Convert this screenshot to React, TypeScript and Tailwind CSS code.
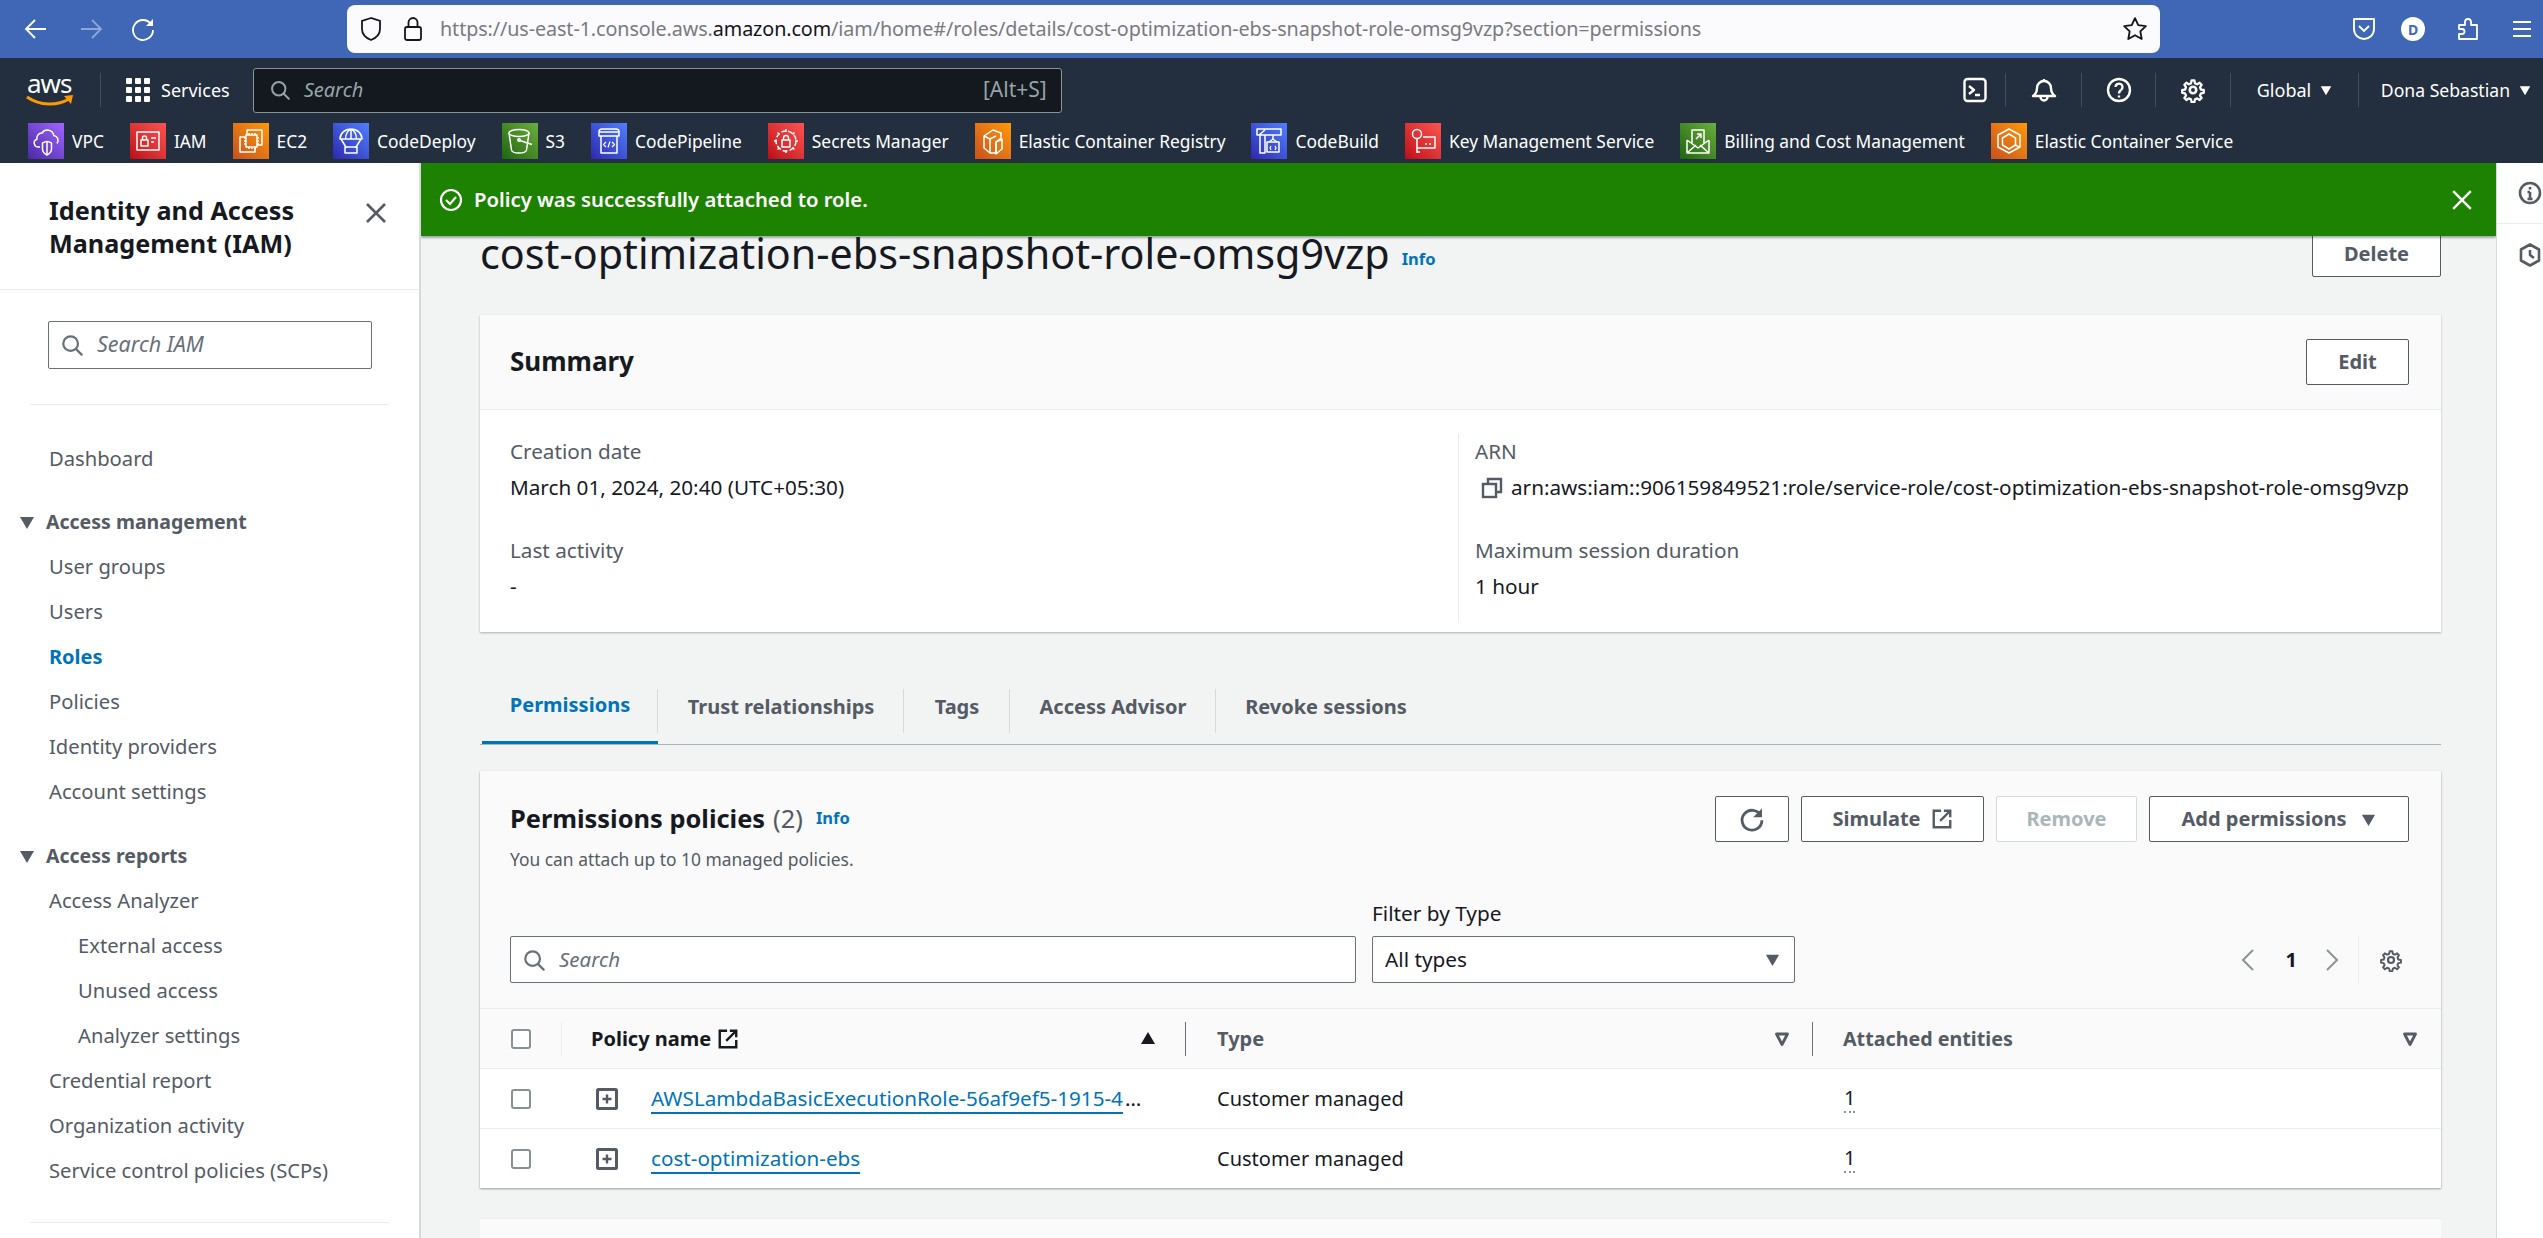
import React from "react";

const FONT = "font-['Noto_Sans','Open_Sans',sans-serif]";

function Stroke({ children, size = 24, vb = 24, w = 2, cls = "" }: { children: React.ReactNode; size?: number; vb?: number; w?: number; cls?: string }) {
  return (
    <svg width={size} height={size} viewBox={`0 0 ${vb} ${vb}`} fill="none" stroke="currentColor" strokeWidth={w} strokeLinecap="round" strokeLinejoin="round" className={`shrink-0 ${cls}`}>
      {children}
    </svg>
  );
}

const Gear = ({ size = 24, w = 2 }: { size?: number; w?: number }) => (
  <Stroke size={size} w={w}>
    <circle cx="12" cy="12" r="3" />
    <path d="M10.5 2h3l.6 3 2.3 1 2.6-1.6 2 2.2-1.6 2.5.9 2.4 3 .5v3l-3 .6-1 2.3 1.7 2.5-2.1 2.1-2.5-1.7-2.3 1-.6 2.9h-3l-.6-2.9-2.3-1-2.5 1.7-2.1-2.1 1.7-2.5-1-2.3-3-.6v-3l3-.5.9-2.4-1.6-2.5 2-2.2 2.6 1.6 2.3-1z" transform="translate(12 12) scale(.88) translate(-12 -12)" />
  </Stroke>
);

const ExtLink = ({ size = 24 }: { size?: number }) => (
  <Stroke size={size} w={2.6}>
    <path d="M11 3H3v18h18v-8" strokeLinecap="butt" strokeLinejoin="miter" />
    <path d="M10 14 21 3M14 3h7v7" strokeLinecap="butt" strokeLinejoin="miter" />
  </Stroke>
);

const Refresh = ({ size = 28 }: { size?: number }) => (
  <svg width={size} height={size} viewBox="0 0 24 24" fill="none" className="shrink-0">
    <path d="M19.5 9A8.5 8.5 0 1 0 20.5 13" stroke="currentColor" strokeWidth="2.4" />
    <path d="M20.5 3v7.5H13z" fill="currentColor" />
  </svg>
);

const SearchIcon = ({ size = 24, w = 2.4 }: { size?: number; w?: number }) => (
  <Stroke size={size} w={w}>
    <circle cx="10.5" cy="10.5" r="8" />
    <path d="m16.5 16.5 6 6" />
  </Stroke>
);

const Caret = ({ size = 16, cls = "" }: { size?: number; cls?: string }) => (
  <svg width={size} height={size} viewBox="0 0 16 16" className={`shrink-0 ${cls}`}>
    <path d="M1 3h14L8 15z" fill="currentColor" />
  </svg>
);

const HollowCaret = () => (
  <svg width="16" height="16" viewBox="0 0 16 16" className="shrink-0 text-[#545b64]">
    <path d="M2.5 3h11L8 13.5z" fill="none" stroke="currentColor" strokeWidth="2.8" strokeLinejoin="round" />
  </svg>
);

const ICON_PATHS: Record<string, React.ReactNode> = {
  VPC: (
    <>
      <path d="M12 24H10a4 4 0 0 1-1-7.8A5 5 0 0 1 14 10a6.500 6.500 0 0 1 11.800 2.500 5 5 0 0 1 3.200 8" />
      <path d="M14.500 20c2-1 4-1.500 4.500-1.500s2.500.5 4.500 1.500v6c0 3-2.500 5-4.500 6-2-1-4.500-3-4.500-6z" />
      <path d="M19 18.500V32" />
    </>
  ),
  IAM: (
    <>
      <rect x="7" y="9" width="22" height="18" />
      <rect x="11" y="17" width="7" height="6" />
      <path d="M12.500 17v-2a2 2 0 0 1 4 0v2M21 15h5M21 19h3" />
    </>
  ),
  EC2: (
    <>
      <path d="M14 12V7h15v15h-5M12 14H7v15h15v-5" />
      <rect x="13" y="12" width="11" height="12" />
      <path d="M16 10v2M19 10v2M22 10v2M16 24v2M19 24v2M22 24v2M11 15h2M11 18h2M11 21h2M24 15h2M24 18h2M24 21h2" />
    </>
  ),
  CodeDeploy: (
    <>
      <path d="M7 16a11 10 0 0 1 22 0zM18 6v10M12.500 16c0-5 2.500-9 5.500-10 3 1 5.500 5 5.500 10" />
      <path d="M8 16l5.500 9M28 16l-5.500 9" />
      <rect x="12" y="24" width="12" height="6" />
    </>
  ),
  S3: (
    <>
      <ellipse cx="17" cy="10" rx="10" ry="3.500" />
      <path d="M7 10l2.500 17c.3 2 3.500 3 7.500 3s7.200-1 7.500-3L27 10" />
      <circle cx="17" cy="17" r="1.200" />
      <path d="M18 17.500l12 4" />
    </>
  ),
  CodePipeline: (
    <>
      <path d="M8 13V9a3 3 0 0 1 3-3h14a3 3 0 0 1 3 3v4z" />
      <path d="M8 9h20M10 13v17h16V13" />
      <path d="M15 19l-2.500 2.500L15 24M21 19l2.500 2.500L21 24M19 18.500l-2 6" strokeWidth="1.200" />
    </>
  ),
  "Secrets Manager": (
    <>
      <circle cx="18" cy="18" r="10" strokeDasharray="5 2" />
      <rect x="14" y="17" width="8" height="7" />
      <path d="M15.500 17v-2a2.500 2.500 0 0 1 5 0v2M18 6v3M18 27v3M6 18h3M27 18h3M9.500 9.500l2 2M24.500 24.500l2 2M26.500 9.500l-2 2M11.500 24.500l-2 2" />
    </>
  ),
  "Elastic Container Registry": (
    <>
      <path d="M9 13l9-6 8 3v5l-5 4v11l-6 0-6-5z" />
      <path d="M9 13l6 3v14M15 16l6-3M21 19l6-3v10l-6 5z" />
    </>
  ),
  CodeBuild: (
    <>
      <path d="M6 6h24v6H6zM9 12v18h5V12M14 7l-6 5" />
      <path d="M22 12v4" />
      <rect x="16" y="19" width="12" height="10" />
      <path d="M18 19l4-3 4 3M20 23l-1 2 1 2M24 23l1 2-1 2" strokeWidth="1.200" />
    </>
  ),
  "Key Management Service": (
    <>
      <circle cx="12" cy="11" r="4.500" />
      <path d="M12 15.500V30M12 25h5M12 29h3M18 14h12v11H17M20 21h2M24 21h2" />
    </>
  ),
  "Billing and Cost Management": (
    <>
      <path d="M7 17v13h22V17M7 30l9-8M29 30l-9-8M7 17l11 8 11-8" />
      <path d="M12 20V7h12v13M16 16l5-5M17 11h4v4" />
    </>
  ),
  "Elastic Container Service": (
    <>
      <path d="M18 6l11 6v12l-11 6-11-6V12z" />
      <path d="M18 11l6.500 4v7L18 26l-6.500-4v-7z" />
      <path d="M24.500 22l4 2.500" />
    </>
  ),
};

const FAVS: { name: string; g: string }[] = [
  { name: "VPC", g: "bg-linear-to-tr from-[#4d27a8] to-[#a166ff]" },
  { name: "IAM", g: "bg-linear-to-tr from-[#bd0816] to-[#ff5252]" },
  { name: "EC2", g: "bg-linear-to-tr from-[#c8511b] to-[#ff9900]" },
  { name: "CodeDeploy", g: "bg-linear-to-tr from-[#2e27ad] to-[#527fff]" },
  { name: "S3", g: "bg-linear-to-tr from-[#1b660f] to-[#6cae3e]" },
  { name: "CodePipeline", g: "bg-linear-to-tr from-[#2e27ad] to-[#527fff]" },
  { name: "Secrets Manager", g: "bg-linear-to-tr from-[#bd0816] to-[#ff5252]" },
  { name: "Elastic Container Registry", g: "bg-linear-to-tr from-[#c8511b] to-[#ff9900]" },
  { name: "CodeBuild", g: "bg-linear-to-tr from-[#2e27ad] to-[#527fff]" },
  { name: "Key Management Service", g: "bg-linear-to-tr from-[#bd0816] to-[#ff5252]" },
  { name: "Billing and Cost Management", g: "bg-linear-to-tr from-[#1b660f] to-[#6cae3e]" },
  { name: "Elastic Container Service", g: "bg-linear-to-tr from-[#c8511b] to-[#ff9900]" },
];

function BrowserBar() {
  return (
    <div className="flex h-[58px] shrink-0 items-center bg-[#3f67b6] text-white">
      <div className="flex w-[347px] shrink-0 items-center pl-[24px]">
        <svg width="24" height="24" viewBox="0 0 24 24" fill="none" stroke="currentColor" strokeWidth="1.800" className="shrink-0"><path d="M22 12H2M11 3l-9 9 9 9" /></svg>
        <svg width="24" height="24" viewBox="0 0 24 24" fill="none" stroke="#8ea7d8" strokeWidth="1.800" className="ml-[31px] shrink-0"><path d="M2 12h20M13 3l9 9-9 9" /></svg>
        <svg width="24" height="24" viewBox="0 0 24 24" fill="none" stroke="currentColor" strokeWidth="1.800" className="ml-[28px] shrink-0"><path d="M20 7A10 10 0 1 0 22 13" /><path d="M22 2v7h-7" fill="currentColor" stroke="none" /></svg>
      </div>
      <div className="flex h-[48px] w-[1813px] shrink-0 items-center rounded-[8px] bg-[#fbfbfe] pl-[12px] pr-[12px] text-[#15141a]">
        <svg width="24" height="26" viewBox="0 0 24 26" fill="none" stroke="currentColor" strokeWidth="1.800" className="shrink-0"><path d="M12 2 3 5v8c0 5 4 9 9 11 5-2 9-6 9-11V5z" /></svg>
        <svg width="22" height="26" viewBox="0 0 22 26" fill="none" stroke="currentColor" strokeWidth="1.800" className="ml-[19px] shrink-0"><rect x="3" y="11" width="16" height="13" rx="2" /><path d="M6.500 11V6.500a4.500 4.500 0 0 1 9 0V11" /></svg>
        <div className="ml-[16px] flex-1 whitespace-nowrap text-[19.750px] tracking-[-0.1px] text-[#7a7a7f]">
          https://us-east-1.console.aws.<span className="text-[#15141a]">amazon.com</span>/iam/home#/roles/details/cost-optimization-ebs-snapshot-role-omsg9vzp?section=permissions
        </div>
        <svg width="26" height="26" viewBox="0 0 24 24" fill="none" stroke="currentColor" strokeWidth="1.700" strokeLinejoin="round" className="shrink-0"><path d="m12 2 3 6.500 7 .9-5.100 4.800 1.300 7L12 17.800l-6.200 3.400 1.300-7L2 9.400l7-.9z" /></svg>
      </div>
      <div className="flex flex-1 items-center pl-[192px]">
        <svg width="24" height="26" viewBox="0 0 24 26" fill="none" stroke="currentColor" strokeWidth="1.900" className="shrink-0"><path d="M2 3h20v10c0 6-5 10-10 10S2 19 2 13z" strokeLinejoin="round" /><path d="m7 10 5 5 5-5" /></svg>
        <div className="ml-[25px] flex h-[24px] w-[24px] shrink-0 items-center justify-center rounded-full bg-white text-[14px] font-bold text-[#3f67b6]">D</div>
        <svg width="24" height="26" viewBox="0 0 24 26" fill="none" stroke="currentColor" strokeWidth="1.800" strokeLinejoin="round" className="ml-[30px] shrink-0"><path d="M3 9h6V6a3 3 0 0 1 6 0v3h6v14H3v-5h3a2.500 2.500 0 0 0 0-5H3z" transform="translate(1 0)" /></svg>
        <svg width="24" height="24" viewBox="0 0 24 24" fill="none" stroke="currentColor" strokeWidth="2" className="ml-[31px] shrink-0"><path d="M3 5h18M3 12h18M3 19h18" /></svg>
      </div>
    </div>
  );
}

function Sep() {
  return <div className="h-[34px] w-px shrink-0 bg-[#414d5c]" />;
}

function AwsNav() {
  return (
    <div className="flex h-[105px] shrink-0 flex-col bg-[#232f3e] text-white">
      <div className="flex h-[60px] items-center pt-[4px]">
        <div className="flex w-[100px] shrink-0 flex-col items-start pl-[27px]">
          <span className="text-[26px] leading-[18px] tracking-[-1px]">aws</span>
          <svg width="48" height="12" viewBox="0 0 48 12" fill="none" className="-ml-px mt-[3px] shrink-0">
            <path d="M1 2c13 9 30 9 42 2" stroke="#f90" strokeWidth="3" />
            <path d="M38 1l9-1-2 9z" fill="#f90" />
          </svg>
        </div>
        <Sep />
        <div className="ml-[25px] grid shrink-0 grid-cols-3 gap-[3px]">
          {Array.from({ length: 9 }).map((_, i) => (
            <div key={i} className="h-[6px] w-[6px] rounded-[1px] bg-white" />
          ))}
        </div>
        <span className="ml-[11px] text-[18px]">Services</span>
        <div className="ml-[23px] flex h-[45px] w-[809px] items-center rounded-[3px] border border-[#879596] bg-[#14181f] pl-[16px] pr-[14px] text-[#95a5a6]">
          <SearchIcon size={20} w={2.400} />
          <span className="ml-[14px] flex-1 text-[20px] italic text-[#95a5a6]">Search</span>
          <span className="text-[21px]">[Alt+S]</span>
        </div>
        <div className="ml-auto flex items-center text-[18px]">
          <div className="flex w-[72px] justify-center pl-[12px]">
            <svg width="24" height="26" viewBox="0 0 24 26" fill="none" stroke="currentColor" strokeWidth="2.400" strokeLinejoin="round"><rect x="1.500" y="2" width="21" height="22" rx="3" /><path d="m6 9 5 4-5 4M12 18h5" /></svg>
          </div>
          <Sep />
          <div className="flex w-[75px] justify-center">
            <svg width="26" height="26" viewBox="0 0 26 26" fill="none" stroke="currentColor" strokeWidth="2.400" strokeLinejoin="round"><path d="M2 19c3-2 4-4 4-8a7 7 0 0 1 14 0c0 4 1 6 4 8zM13 2v2" /><path d="M9.500 20a3.500 3.500 0 0 0 7 0" /></svg>
          </div>
          <Sep />
          <div className="flex w-[73px] justify-center">
            <svg width="26" height="26" viewBox="0 0 26 26" fill="none" stroke="currentColor" strokeWidth="2.400"><circle cx="13" cy="13" r="11" /><path d="M9.500 10a3.500 3.500 0 1 1 5.500 3c-1.500 1-2 1.500-2 3.500" /><path d="M13 18.500v2" /></svg>
          </div>
          <Sep />
          <div className="flex w-[74px] justify-center"><Gear size={26} w={2.400} /></div>
          <Sep />
          <div className="flex w-[127px] items-center justify-center gap-[9px]">Global <Caret size={12} /></div>
          <Sep />
          <div className="flex w-[184px] items-center justify-end gap-[9px] pr-[12px] text-[17.600px]">Dona Sebastian <Caret size={12} /></div>
        </div>
      </div>
      <div className="mt-[5px] flex h-[36px] items-center gap-[26px] pl-[28px]">
        {FAVS.map((f) => (
          <div key={f.name} className="flex items-center gap-[8px]">
            <div className={`h-[36px] w-[36px] shrink-0 ${f.g}`}>
              <svg width="36" height="36" viewBox="0 0 36 36" fill="none" stroke="#fff" strokeWidth="1.500" strokeLinejoin="round">{ICON_PATHS[f.name]}</svg>
            </div>
            <span className="whitespace-nowrap text-[17.350px]">{f.name}</span>
          </div>
        ))}
      </div>
    </div>
  );
}

const NavItem = ({ children, active, sub }: { children: React.ReactNode; active?: boolean; sub?: boolean }) => (
  <div className={`flex h-[45px] items-center ${sub ? "pl-[78px]" : "pl-[49px]"} ${active ? "text-[20px] font-bold text-[#0073bb]" : "text-[20.200px] text-[#545b64]"}`}>{children}</div>
);

const NavHead = ({ children }: { children: React.ReactNode }) => (
  <div className="flex h-[45px] items-center pl-[19px] text-[19.500px] font-bold text-[#545b64]">
    <Caret size={16} cls="mr-[11px]" />
    {children}
  </div>
);

function Sidebar() {
  return (
    <aside className="relative z-10 flex w-[421px] shrink-0 flex-col overflow-hidden border-r-2 border-[#d5dbdb] bg-white">
      <div className="flex h-[127px] shrink-0 justify-between border-b border-[#eaeded] pl-[49px] pr-[33px] pt-[31px]">
        <h2 className="w-[270px] text-[25.200px] font-bold leading-[33px] text-[#16191f]">Identity and Access Management (IAM)</h2>
        <svg width="20" height="20" viewBox="0 0 20 20" fill="none" stroke="#545b64" strokeWidth="2.600" className="mt-[9px] shrink-0"><path d="m1 1 18 18M19 1 1 19" /></svg>
      </div>
      <div className="pl-[48px] pr-[47px] pt-[31px]">
        <div className="flex h-[48px] items-center rounded-[2px] border border-[#687078] pl-[12px] text-[#687078]">
          <SearchIcon size={22} w={2.400} />
          <span className="ml-[14px] pb-[2px] text-[21.500px] italic">Search IAM</span>
        </div>
      </div>
      <div className="mx-[30px] mt-[35px] h-px shrink-0 bg-[#eaeded]" />
      <div className="mt-[31px]">
        <NavItem>Dashboard</NavItem>
      </div>
      <div className="mt-[18px]">
        <NavHead>Access management</NavHead>
        <NavItem>User groups</NavItem>
        <NavItem>Users</NavItem>
        <NavItem active>Roles</NavItem>
        <NavItem>Policies</NavItem>
        <NavItem>Identity providers</NavItem>
        <NavItem>Account settings</NavItem>
      </div>
      <div className="mt-[19px]">
        <NavHead>Access reports</NavHead>
        <NavItem>Access Analyzer</NavItem>
        <NavItem sub>External access</NavItem>
        <NavItem sub>Unused access</NavItem>
        <NavItem sub>Analyzer settings</NavItem>
        <NavItem>Credential report</NavItem>
        <NavItem>Organization activity</NavItem>
        <NavItem>Service control policies (SCPs)</NavItem>
      </div>
      <div className="mx-[30px] mt-[29px] h-px shrink-0 bg-[#eaeded]" />
    </aside>
  );
}

const Info = ({ cls = "" }: { cls?: string }) => <span className={`text-[16.500px] font-bold text-[#0073bb] ${cls}`}>Info</span>;

const Btn = ({ children, cls = "" }: { children: React.ReactNode; cls?: string }) => (
  <div className={`flex h-[46px] shrink-0 items-center justify-center rounded-[2px] border border-[#545b64] bg-white text-[20px] font-bold text-[#545b64] ${cls}`}>{children}</div>
);

const Check = () => <div className="h-[20px] w-[20px] shrink-0 rounded-[3px] border-2 border-[#879196] bg-white" />;

const Field = ({ label, children }: { label: string; children: React.ReactNode }) => (
  <div>
    <div className="flex h-[36px] items-center text-[20.700px] text-[#545b64]">{label}</div>
    <div className="flex h-[36px] items-center text-[20.700px] text-[#16191f]">{children}</div>
  </div>
);

const Row = ({ name, more }: { name: string; more?: boolean }) => (
  <div className="flex h-[60px] items-center border-t border-[#eaeded] bg-white">
    <div className="w-[116px] shrink-0 pl-[31px]"><Check /></div>
    <svg width="22" height="22" viewBox="0 0 22 22" className="shrink-0 text-[#545b64]"><rect x="1.500" y="1.500" width="19" height="19" rx="1" fill="none" stroke="currentColor" strokeWidth="3" /><path d="M11 6.500v9M6.500 11h9" stroke="currentColor" strokeWidth="2.400" /></svg>
    <div className="ml-[33px] w-[566px] shrink-0 whitespace-nowrap text-[20.650px] text-[#0073bb]">
      <span className="inline-block border-b-2 border-[#0073bb] leading-[28px]">{name}</span>
      {more && <span className="ml-[2px] text-[#16191f]">…</span>}
    </div>
    <div className="w-[627px] shrink-0 text-[20px] text-[#16191f]">Customer managed</div>
    <div className="border-b-2 border-dotted border-[#879196] text-[20px] leading-[26px] text-[#16191f]">1</div>
  </div>
);

const TABS = [
  ["Permissions", "w-[176px] text-[#0073bb] border-b-[3px] border-[#0073bb]"],
  ["Trust relationships", "w-[246px]"],
  ["Tags", "w-[106px]"],
  ["Access Advisor", "w-[206px]"],
  ["Revoke sessions", "w-[220px]"],
];

function Main() {
  return (
    <main className="relative min-w-0 flex-1 overflow-hidden bg-[#f2f3f3]">
      <div className="absolute inset-x-0 top-0 z-10 flex h-[73px] items-center bg-[#1d8102] pl-[18px] pr-[23px] text-white shadow-[0_2px_2px_rgba(0,28,36,0.35)]">
        <svg width="24" height="24" viewBox="0 0 24 24" fill="none" stroke="currentColor" strokeWidth="2.200" className="shrink-0"><circle cx="12" cy="12" r="10" /><path d="m7 12 4 4 6-7" /></svg>
        <span className="ml-[11px] flex-1 text-[20.300px] font-semibold">Policy was successfully attached to role.</span>
        <svg width="22" height="22" viewBox="0 0 20 20" fill="none" stroke="currentColor" strokeWidth="2.200" className="shrink-0"><path d="m2 2 16 16M18 2 2 18" /></svg>
      </div>

      <div className="pl-[59px] pr-[55px] pt-[67px]">
        <div className="flex h-[47px] items-center justify-between">
          <div className="flex items-center">
            <h1 className="whitespace-nowrap text-[41.250px] leading-[47px] text-[#16191f]">cost-optimization-ebs-snapshot-role-omsg9vzp</h1>
            <Info cls="ml-[12px] mt-[12px]" />
          </div>
          <Btn cls="w-[129px]">Delete</Btn>
        </div>

        <section className="mt-[38px] h-[317px] bg-white shadow-[0_1px_2px_rgba(0,28,36,0.3)]">
          <div className="flex h-[95px] items-center justify-between border-b border-[#eaeded] bg-[#fafafa] pl-[30px] pr-[32px]">
            <h2 className="pb-[2px] text-[26px] font-bold text-[#16191f]">Summary</h2>
            <Btn cls="w-[103px]">Edit</Btn>
          </div>
          <div className="flex pt-[24px]">
            <div className="flex h-[189px] w-[979px] shrink-0 flex-col gap-[27px] border-r border-[#eaeded] pl-[30px]">
              <Field label="Creation date">March 01, 2024, 20:40 (UTC+05:30)</Field>
              <Field label="Last activity">-</Field>
            </div>
            <div className="flex flex-col gap-[27px] pl-[16px]">
              <Field label="ARN">
                <svg width="22" height="22" viewBox="0 0 22 22" fill="none" stroke="#545b64" strokeWidth="2.400" className="ml-[6px] mr-[8px] shrink-0"><rect x="2" y="7" width="13" height="13" /><path d="M7 7V2h13v13h-5" /></svg>
                <span className="whitespace-nowrap">arn:aws:iam::906159849521:role/service-role/cost-optimization-ebs-snapshot-role-omsg9vzp</span>
              </Field>
              <Field label="Maximum session duration">1 hour</Field>
            </div>
          </div>
        </section>

        <div className="mt-[37px] flex h-[76px] items-stretch border-b border-[#aab7b8] pl-[2px] text-[20px] font-bold text-[#545b64]">
          {TABS.map(([t, c], i) => (
            <div key={t} className={`relative flex shrink-0 items-center justify-center ${c}`}>
              {i < 4 && <div className="absolute right-0 top-[20px] h-[44px] w-px bg-[#d5dbdb]" />}
              {t}
            </div>
          ))}
        </div>

        <section className="mt-[26px] h-[417px] bg-[#fafafa] shadow-[0_1px_2px_rgba(0,28,36,0.4)]">
          <div className="h-[25px]" />
          <div className="flex items-start justify-between pl-[30px] pr-[32px]">
            <div>
              <div className="flex h-[46px] items-center pb-[2px] text-[25.400px] font-bold text-[#16191f]">
                Permissions policies <span className="ml-[8px] font-normal text-[#545b64]">(2)</span>
                <Info cls="ml-[13px]" />
              </div>
              <div className="mt-[6px] text-[17.400px] leading-[23px] text-[#545b64]">You can attach up to 10 managed policies.</div>
            </div>
            <div className="flex gap-[12px]">
              <Btn cls="w-[74px]"><Refresh /></Btn>
              <Btn cls="w-[183px] gap-[10px]">Simulate <ExtLink size={22} /></Btn>
              <Btn cls="w-[141px] !border-[#d5dbdb] !text-[#aab7b8]">Remove</Btn>
              <Btn cls="w-[260px] gap-[15px]">Add permissions <Caret size={15} /></Btn>
            </div>
          </div>
          <div className="mt-[25px] flex items-end pl-[30px] pr-[32px]">
            <div className="flex h-[47px] w-[846px] shrink-0 items-center rounded-[2px] border border-[#687078] bg-white pl-[12px] text-[#687078]">
              <SearchIcon size={22} w={2.400} />
              <span className="ml-[14px] text-[20.500px] italic">Search</span>
            </div>
            <div className="ml-[16px] w-[423px] shrink-0">
              <div className="mb-[4px] flex h-[36px] items-center text-[20.800px] text-[#16191f]">Filter by Type</div>
              <div className="flex h-[47px] items-center justify-between rounded-[2px] border border-[#687078] bg-white pl-[12px] pr-[14px] text-[20.800px] text-[#16191f]">
                All types <Caret size={15} cls="text-[#545b64]" />
              </div>
            </div>
            <div className="ml-auto mr-[6px] flex h-[47px] items-center text-[#879596]">
              <svg width="16" height="24" viewBox="0 0 16 24" fill="none" stroke="currentColor" strokeWidth="2"><path d="M13 2 3 12l10 10" /></svg>
              <span className="ml-[30px] text-[20px] font-bold text-[#16191f]">1</span>
              <svg width="16" height="24" viewBox="0 0 16 24" fill="none" stroke="currentColor" strokeWidth="2" className="ml-[27px]"><path d="m3 2 10 10L3 22" /></svg>
              <div className="ml-[18px] h-[47px] w-px bg-[#eaeded]" />
              <div className="ml-[20px] text-[#545b64]"><Gear size={24} w={2.200} /></div>
            </div>
          </div>
          <div className="mt-[25px] flex h-[60px] items-center border-t border-[#eaeded] text-[20px] font-bold">
            <div className="flex h-[34px] w-[82px] shrink-0 items-center border-r border-[#eaeded] pl-[31px]"><Check /></div>
            <div className="flex h-[34px] w-[624px] shrink-0 items-center border-r border-[#687078] pl-[29px] pr-[29px] text-[#16191f]">
              Policy name <span className="ml-[6px]"><ExtLink size={22} /></span>
              <Caret size={16} cls="ml-auto rotate-180" />
            </div>
            <div className="flex h-[34px] w-[627px] shrink-0 items-center justify-between border-r border-[#687078] pl-[31px] pr-[22px] text-[#545b64]">
              Type <HollowCaret />
            </div>
            <div className="flex h-[34px] flex-1 items-center justify-between pl-[30px] pr-[23px] text-[19.700px] text-[#545b64]">
              Attached entities <HollowCaret />
            </div>
          </div>
          <Row name="AWSLambdaBasicExecutionRole-56af9ef5-1915-4" more />
          <Row name="cost-optimization-ebs" />
        </section>

        <section className="mt-[30px] h-[60px] border-t border-[#eaeded] bg-[#fafafa]" />
      </div>
    </main>
  );
}

function Rail() {
  return (
    <aside className="relative z-20 flex w-[47px] shrink-0 flex-col overflow-hidden border-l border-[#d5dbdb] bg-white text-[#545b64]">
      <div className="flex h-[61px] items-end border-b border-[#eaeded] pb-[18px] pl-[21px]">
        <svg width="24" height="24" viewBox="0 0 24 24" fill="none" stroke="currentColor" strokeWidth="2.600" className="shrink-0"><circle cx="12" cy="12" r="10" /><path d="M12 11v7M9.500 11H12M9.500 18h5M12 6v2.500" /></svg>
      </div>
      <div className="flex pl-[21px] pt-[19px]">
        <svg width="24" height="24" viewBox="0 0 24 24" fill="none" stroke="currentColor" strokeWidth="2.600" strokeLinejoin="round" className="shrink-0"><path d="M12 1.500 21 6.500v11L12 22.500 3 17.500v-11z" /><path d="M12 7v5l4 3" /></svg>
      </div>
    </aside>
  );
}

export default function App() {
  return (
    <div className={`flex h-[1238px] w-[2543px] flex-col overflow-hidden bg-white ${FONT}`}>
      <BrowserBar />
      <AwsNav />
      <div className="flex min-h-0 flex-1">
        <Sidebar />
        <Main />
        <Rail />
      </div>
    </div>
  );
}
